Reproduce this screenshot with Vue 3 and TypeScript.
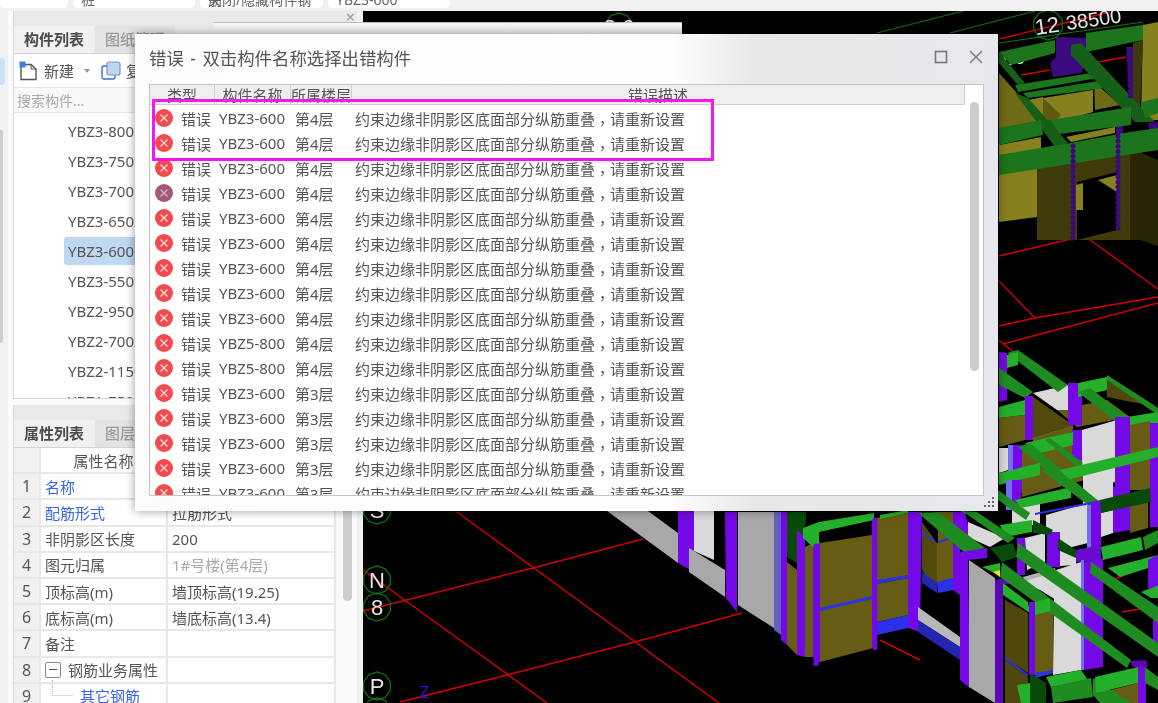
<script setup lang="ts">
type Shape = [string, string]

const PURPLE = '#7408e6'
const DPURPLE = '#5a08b4'
const LILAC = '#7070f0'
const BROWN = '#665c14'
const DBROWN = '#4e480c'
const GREEN = '#24b02a'
const MGREEN = '#1f8c22'
const DGREEN = '#084a08'
const GREY = '#a8a8a8'
const WHITE = '#d9d9d9'
const BLUE = '#2c30e8'
const NAVY = '#2326b0'
const TOP1 = '#1c741c'
const TOP2 = '#155f18'
const TPURPLE = '#3c0a80'
const OLIVE = '#86811e'
const OLIVE2 = '#6e6a16'

const shapes: Shape[] = [
  // upper block behind the dialog's right edge
  [OLIVE, '1143,25 1158,22 1158,120 1141,120'],
  ['#3f3a0a', '1133,43 1143,40 1140,110 1133,110'],
  [TPURPLE, '1126,47 1133,47 1133,100 1130,100'],
  [TPURPLE, '1056,37 1086,38 1086,63 1081,73 1053,77 1050,63 1056,57'],
  [OLIVE2, '999,73 1041,120 999,130'],
  [OLIVE, '1028,100 1043,97 1043,122 1035,124'],
  [OLIVE, '1043,98 1093,90 1093,112 1065,120 1043,120'],
  ['#5f5a12', '1043,98 1061,115 1055,122 1043,120'],
  [OLIVE2, '1094,82 1120,105 1095,110'],
  [TOP1, '999,52 1055,40 1055,53 1011,65'],
  [TOP1, '1086,33 1143,25 1143,40 1086,52'],
  [TOP2, '999,52 1025,83 1018,85 999,63'],
  [TOP1, '1015,85 1098,72 1098,78 1018,92'],
  [TOP1, '1023,93 1105,80 1105,88 1028,98'],
  [TOP2, '1015,93 1028,98 1068,143 1055,147'],
  [TOP2, '1071,45 1081,43 1155,122 1135,122 1071,55'],
  ['#403b0a', '1037,168 1130,148 1130,240 1037,240'],
  ['#2a2605', '1130,148 1158,160 1158,246 1140,240 1130,240'],
  [OLIVE, '999,173 1037,168 1037,217 999,222'],
  ['#000', '1077,182 1117,172 1117,230 1077,240'],
  [OLIVE, '1098,180 1117,175 1117,192'],
  [OLIVE, '1076,185 1083,183 1083,210 1076,210'],
  [OLIVE, '999,145 1041,137 1041,150 999,155'],
  [OLIVE, '1066,137 1115,127 1115,133 1071,142'],
  [TPURPLE, '1116,125 1123,125 1123,150 1116,150'],
  [TPURPLE, '1148,123 1158,122 1158,150 1153,150'],
  [TOP1, '999,128 1041,120 1043,135 999,145'],
  [TOP1, '1050,120 1131,107 1131,125 1051,135'],
  [TOP1, '1141,102 1158,98 1158,113 1145,118'],
  [TOP2, '1041,120 1050,120 1066,143 1056,145'],
  [TOP1, '999,155 1070,143 1130,132 1158,128 1158,150 999,175'],

  // middle right block
  [DBROWN, '1107,375 1157,407 1107,397'],
  [BROWN, '1057,410 1107,400 1130,417 1077,427'],
  ['#524a0c', '1033,397 1073,425 1033,437'],
  [WHITE, '1033,393 1068,385 1068,410 1057,410'],
  [MGREEN, '1018,350 1007,353 1058,392 1068,385'],
  [GREEN, '1007,355 1018,352 1018,365 1007,368'],
  [PURPLE, '999,352 1007,353 1007,400 999,402'],
  [MGREEN, '999,368 1033,392 1025,398 999,385'],
  [PURPLE, '1068,383 1082,383 1082,425 1068,425'],
  [MGREEN, '1107,375 1158,408 1158,415 1107,380'],
  [GREEN, '1078,383 1107,377 1107,390 1078,397'],
  [BROWN, '1033,437 1073,425 1073,432 1033,445'],
  [BROWN, '999,418 1025,415 1025,440 999,447'],
  [GREEN, '999,407 1025,400 1025,415 999,418'],
  [PURPLE, '1025,396 1033,396 1033,440 1025,440'],
  [MGREEN, '1078,392 1090,388 1158,440 1158,455'],
  [GREEN, '1127,417 1158,412 1158,423 1130,427'],
  [BROWN, '1022,450 1080,437 1085,480 1022,497'],
  [WHITE, '1082,430 1117,420 1117,480 1093,497 1082,470'],
  [WHITE, '1083,473 1113,470 1113,498 1083,505'],
  [BROWN, '1130,425 1150,421 1150,490 1130,490'],
  [PURPLE, '1115,417 1130,417 1130,490 1115,490'],
  [PURPLE, '1150,423 1158,423 1158,527 1150,527'],
  [PURPLE, '1072,430 1082,430 1082,460 1072,460'],
  [WHITE, '999,448 1008,448 1008,470 999,473'],
  [LILAC, '1008,445 1013,445 1013,493 1008,493'],
  [PURPLE, '1013,445 1022,445 1022,493 1013,493'],
  [GREEN, '1025,443 1073,432 1073,445 1040,453'],
  [MGREEN, '1018,447 1030,443 1097,500 1090,505'],
  [MGREEN, '1045,440 1050,438 1083,463 1077,467'],
  [GREEN, '1060,470 1158,447 1158,457 1067,480'],
  [GREEN, '999,473 1040,463 1040,475 999,485'],

  // lower right block
  [BROWN, '1130,497 1148,497 1148,528 1130,533'],
  [WHITE, '1012,505 1040,500 1040,525 1012,525'],
  [LILAC, '1006,480 1012,480 1012,510 1006,510'],
  [PURPLE, '1012,480 1021,480 1021,510 1012,510'],
  [MGREEN, '998,490 1030,513 1026,520 998,500'],
  [GREEN, '1015,500 1071,487 1071,498 1021,508'],
  [MGREEN, '1041,470 1058,470 1100,502 1088,505'],
  [WHITE, '1046,515 1088,503 1088,543 1068,548 1046,527'],
  [LILAC, '1087,505 1093,505 1093,550 1087,550'],
  [PURPLE, '1091,502 1101,500 1101,550 1091,550'],
  [WHITE, '1101,513 1113,510 1113,533 1101,537'],
  [PURPLE, '1113,487 1130,483 1130,530 1113,533'],
  [BLUE, '1035,513 1091,502 1091,504 1035,515'],
  [DGREEN, '1100,500 1150,488 1151,502 1101,513'],
  [WHITE, '1025,538 1045,533 1045,562 1027,570'],
  [PURPLE, '1047,532 1060,532 1060,567 1047,567'],
  [WHITE, '1060,545 1076,555 1076,565 1060,566'],
  [PURPLE, '1017,538 1025,538 1025,575 1017,575'],
  [DGREEN, '1033,520 1053,530 1050,535 1033,533'],
  [DGREEN, '1058,538 1076,550 1076,558 1058,550'],
  [GREEN, '1000,525 1032,520 1032,532 1005,537'],
  ['#6a0ad0', '1076,550 1101,545 1101,560 1076,562'],
  [GREEN, '1101,547 1141,537 1143,550 1103,560'],
  [MGREEN, '1143,537 1158,530 1158,543 1145,550'],
  [GREEN, '1108,568 1158,555 1158,565 1120,577'],
  [GREEN, '1141,592 1158,585 1158,598 1151,598'],
  [PURPLE, '1148,560 1158,555 1158,585 1148,590'],
  [PURPLE, '1153,607 1158,607 1158,645 1153,645'],
  [WHITE, '1056,570 1081,562 1081,670 1053,675 1054,600'],
  [WHITE, '1025,578 1056,570 1056,600 1040,590 1025,585'],
  ['#b0b0b0', '1023,577 1055,568 1056,572 1025,581'],
  [LILAC, '1081,560 1084,560 1084,670 1081,670'],
  [PURPLE, '1084,562 1103,558 1103,667 1084,670'],
  [MGREEN, '1091,562 1158,607 1158,623 1090,573'],

  // front walls and columns along the bottom
  [GREY, '607,511 648,511 678,533 678,563'],
  [PURPLE, '678,511 694,511 694,572 678,563'],
  [WHITE, '694,511 714,511 714,560 694,551'],
  [GREY, '689,548 725,570 725,597 689,572'],
  [PURPLE, '725,512 737,512 737,612 726,598'],
  [GREY, '738,512 774,512 774,628 738,605'],
  ['#6060c0', '774,512 781,512 781,635 774,630'],
  [PURPLE, '781,512 787,512 787,645 781,640'],
  [BROWN, '787,562 797,570 797,655 787,645'],
  [DGREEN, '787,512 806,512 806,520 797,563 787,557'],
  [PURPLE, '797,530 805,537 805,657 797,655'],
  [BROWN, '805,547 813,543 813,657 805,657'],
  [PURPLE, '813,543 820,541 820,662 815,664 813,657'],
  [BROWN, '820,543 872,535 877,647 820,662'],
  [BLUE, '820,608 876,595 876,598 820,611'],
  [PURPLE, '872,518 877,518 877,648 872,648'],
  [GREEN, '803,528 819,522 874,513 874,520 819,532 819,543 813,547 803,538'],
  [BROWN, '877,518 908,513 908,575 877,583'],
  [BLUE, '877,580 908,575 908,578 877,584'],
  [BROWN, '877,584 908,578 908,615 877,622'],
  [BLUE, '877,622 908,615 908,628 877,635'],
  [GREEN, '880,515 908,510 908,513 880,519'],
  [PURPLE, '908,512 922,512 920,632 908,628'],
  [BROWN, '938,512 953,512 953,540 938,544'],
  ['#524a0c', '922,522 937,543 937,593 922,570'],
  [BROWN, '937,543 953,538 953,578 937,583'],
  [BLUE, '922,532 935,540 935,542 922,534'],
  [BLUE, '938,541 948,538 948,540 938,543'],
  [NAVY, '922,572 937,583 937,593 922,583'],
  [BLUE, '937,582 953,578 953,590 938,593'],
  [PURPLE, '953,512 965,512 968,525 968,543 960,550 960,595 953,590'],
  [WHITE, '968,522 1005,538 990,547 968,537'],
  [MGREEN, '918,513 938,512 985,548 965,553'],
  [MGREEN, '960,511 977,512 1015,538 1008,543 968,515'],
  ['#b8b8b8', '918,607 960,637 960,647 918,620'],
  [NAVY, '918,620 960,647 960,660 918,632'],
  [PURPLE, '960,553 968,553 970,688 960,680'],
  [PURPLE, '960,552 987,548 987,558 968,560'],
  [GREY, '969,560 995,578 995,703 969,687'],
  [GREEN, '982,567 1000,563 1000,577 995,573'],
  ['#e5e520', '993,572 1000,570 1000,577'],
  [DGREEN, '990,548 1013,543 1017,557 1002,562'],
  [DPURPLE, '995,580 1005,578 1013,583 1003,585 1003,703 995,703'],
  [DBROWN, '1005,600 1028,613 1028,673 1005,658'],
  [BLUE, '1005,657 1028,674 1028,677 1005,660'],
  [DBROWN, '1005,660 1028,677 1028,703 1005,703'],
  [BROWN, '1035,613 1053,610 1053,673 1035,678'],
  [BLUE, '1035,673 1053,670 1053,673 1035,678'],
  [MGREEN, '1018,543 1158,643 1158,657 1016,557'],
  [MGREEN, '1002,562 1131,660 1127,668 1000,577'],
  [GREEN, '1003,583 1028,602 1030,613 1003,595'],
  [PURPLE, '1029,602 1035,602 1035,675 1029,675'],
  [GREEN, '1035,602 1050,598 1050,611 1035,615'],
  [GREEN, '1017,685 1030,683 1030,703 1021,703'],
  [BROWN, '1111,690 1138,683 1138,703 1125,703'],
  [MGREEN, '1093,678 1131,703 1100,703 1093,695'],
  [GREEN, '1046,677 1081,670 1088,680 1051,687'],
  [MGREEN, '1051,687 1091,678 1093,697 1053,703'],
  [GREEN, '1095,677 1138,667 1138,683 1096,693'],
  [DGREEN, '1030,673 1046,683 1046,703 1030,703'],
  [PURPLE, '1138,667 1146,667 1146,703 1138,703'],
  [DPURPLE, '1130,661 1146,660 1148,667 1133,667'],
  [MGREEN, '1145,667 1158,677 1158,690 1145,683'],
]

const redLines = [
  '457,512 719,703',
  '363,570 547,703',
  '363,611 533,568 643,539',
  '400,702 507,675 635,642 742,613',
  '999,39 1110,12',
  '1021,75 1050,70',
  '1098,62 1126,57',
  '1070,240 1117,225',
  '999,256 1067,240',
  '1090,240 1158,289',
  '999,281 1035,318',
  '999,326 1035,318 1158,297',
  '1003,344 1158,303',
  '999,340 1013,352',
  '1103,583 1125,575',
  '1122,612 1140,609',
  '880,640 920,660',
]

const greenLines = ['877,33 963,11', '950,33 1035,11', '999,43 1143,22']

// rows of round dots that give some columns their bumpy edge
const scallops: [string, number, number, number][] = [
  [PURPLE, 816, 546, 664],
  [PURPLE, 875, 520, 648],
  [PURPLE, 1032, 605, 674],
  [TPURPLE, 1073, 146, 238],
  [TPURPLE, 1118, 136, 228],
  [TPURPLE, 1130, 50, 100],
]

// ten sided ring used for the axis labels
function ring(cx: number, cy: number, r: number) {
  const pts: string[] = []
  for (let i = 0; i < 10; i++) {
    const a = (i * Math.PI) / 5 + Math.PI / 10
    pts.push(`${(cx + r * Math.cos(a)).toFixed(1)},${(cy + r * Math.sin(a)).toFixed(1)}`)
  }
  return pts.join(' ')
}

const rings = [
  { x: 377, y: 580, t: 'N' },
  { x: 377, y: 607, t: '8' },
  { x: 377, y: 510, t: 'S' },
  { x: 377, y: 686, t: 'P' },
  { x: 377, y: 712, t: '7' },
  { x: 619, y: 27, t: '8 6' },
]

const components = ['YBZ3-800', 'YBZ3-750', 'YBZ3-700', 'YBZ3-650', 'YBZ3-600', 'YBZ3-550', 'YBZ2-950', 'YBZ2-700', 'YBZ2-1150', 'YBZ1-750']

const props = [
  { n: 1, name: '名称', value: 'YBZ3-600', link: true },
  { n: 2, name: '配筋形式', value: '拉筋形式', link: true },
  { n: 3, name: '非阴影区长度', value: '200' },
  { n: 4, name: '图元归属', value: '1#号楼(第4层)', muted: true },
  { n: 5, name: '顶标高(m)', value: '墙顶标高(19.25)' },
  { n: 6, name: '底标高(m)', value: '墙底标高(13.4)' },
  { n: 7, name: '备注', value: '' },
  { n: 8, name: '钢筋业务属性', value: '', group: true },
  { n: 9, name: '其它钢筋', value: '', child: true, link: true },
]

const errors = [
  ...Array.from({ length: 9 }, () => ({ name: 'YBZ3-600', floor: '第4层' })),
  ...Array.from({ length: 2 }, () => ({ name: 'YBZ5-800', floor: '第4层' })),
  ...Array.from({ length: 5 }, () => ({ name: 'YBZ3-600', floor: '第3层' })),
]
</script>

<template>
  <div class="app">
    <div class="topbar">
      <div class="pill p1">楼层</div>
      <div class="pill p2">桩</div>
      <div class="pill p3">关闭/隐藏构件钢筋</div>
      <div class="pill p4">YBZ3-600</div>
    </div>

    <div class="main">
      <div class="rail">
        <div class="rail-item"></div>
        <div class="rail-scroll"></div>
      </div>

      <div class="side">
        <section class="panel upper">
          <div class="panel-title"><span class="panel-x">×</span></div>
          <div class="tabs">
            <div class="tab active">构件列表</div>
            <div class="tab">图纸管理</div>
          </div>
          <div class="toolbar">
            <svg class="tool-icon" width="20" height="20" viewBox="0 0 20 20">
              <path d="M2 3.5h10l5 4.5v10.5H2z" fill="#fff" stroke="#555" stroke-width="1.4" />
              <path d="M12 3.5v4.5h5" fill="none" stroke="#555" stroke-width="1" />
              <rect x="0.5" y="0.5" width="6" height="6" fill="#3a7fe0" />
            </svg>
            <span class="tool-label">新建</span>
            <span class="caret"></span>
            <svg class="tool-icon copy" width="20" height="20" viewBox="0 0 20 20">
              <rect x="1" y="5" width="13" height="13" rx="2" fill="#fff" stroke="#2f73c9" stroke-width="1.4" />
              <rect x="6" y="1" width="13" height="13" rx="2" fill="#bcd6f2" stroke="#7d93ad" stroke-width="1.2" />
            </svg>
            <span class="tool-label">复制</span>
          </div>
          <div class="search">搜索构件...</div>
          <div class="list">
            <div v-for="(c, i) in components" :key="c" class="list-row" :class="{ selected: i === 4 }">
              <span class="list-text">{{ c }}</span>
            </div>
          </div>
        </section>

        <section class="panel lower">
          <div class="panel-title short"></div>
          <div class="tabs">
            <div class="tab active">属性列表</div>
            <div class="tab">图层管理</div>
          </div>
          <div class="prop-wrap">
            <div class="prop-table">
              <div class="prop-row head">
                <div class="cell num"></div>
                <div class="cell name center">属性名称</div>
                <div class="cell value center">属性值</div>
              </div>
              <div v-for="p in props" :key="p.n" class="prop-row">
                <div class="cell num">{{ p.n }}</div>
                <div class="cell name" :class="{ link: p.link, child: p.child }">
                  <span v-if="p.group" class="minus"></span>
                  <span v-if="p.child" class="tree"></span>
                  {{ p.name }}
                </div>
                <div class="cell value" :class="{ muted: p.muted }">{{ p.value }}</div>
              </div>
            </div>
            <div class="prop-track"><div class="prop-thumb"></div></div>
          </div>
        </section>
      </div>

      <div class="view">
        <svg width="795" height="692" viewBox="363 11 795 692">
          <rect x="363" y="11" width="795" height="692" fill="#000" />
          <polyline v-for="l in greenLines" :key="l" :points="l" fill="none" stroke="#0f7a0f" stroke-width="1" />
          <polyline v-for="l in redLines" :key="l" :points="l" fill="none" stroke="#d40000" stroke-width="1.4" />
          <text class="axis small" x="1004" y="66" transform="rotate(-8 1004 66)">00</text>
          <polygon v-for="(s, i) in shapes" :key="i" :points="s[1]" :fill="s[0]" />
          <line v-for="c in scallops" :key="c[1] + '-' + c[2]" :x1="c[1]" :y1="c[2]" :x2="c[1]" :y2="c[3]" :stroke="c[0]" stroke-width="5" stroke-linecap="round" stroke-dasharray="0.1 5" />
          <g v-for="r in rings" :key="r.y + r.x">
            <polygon :points="ring(r.x, r.y, 14)" fill="none" stroke="#0f7a0f" stroke-width="1.2" />
            <text :x="r.x" :y="r.y + 8" class="axis" text-anchor="middle">{{ r.t }}</text>
          </g>
          <polygon :points="ring(1048, 25, 15)" fill="none" stroke="#0f7a0f" stroke-width="1.2" />
          <text class="axis" x="1036" y="35" transform="rotate(-8 1036 35)">12</text>
          <text class="axis small" x="1067" y="30" transform="rotate(-8 1067 30)">38500</text>
          <text class="axis-z" x="419" y="698">Z</text>
        </svg>
      </div>
    </div>

    <div class="back-window"></div>

    <div class="dialog">
      <div class="dialog-head">
        <span class="dialog-title">错误 - 双击构件名称选择出错构件</span>
        <svg class="win-btn" width="14" height="14" viewBox="0 0 14 14">
          <rect x="1.5" y="1.5" width="11" height="11" fill="none" stroke="#777" stroke-width="1.6" />
        </svg>
        <svg class="win-btn close" width="16" height="16" viewBox="0 0 16 16">
          <path d="M2 2l12 12M14 2L2 14" stroke="#777" stroke-width="1.4" fill="none" />
        </svg>
      </div>
      <div class="err-box">
        <div class="err-head">
          <div class="eh c1">类型</div>
          <div class="eh c2">构件名称</div>
          <div class="eh c3">所属楼层</div>
          <div class="eh c4">错误描述</div>
        </div>
        <div class="err-body">
          <div v-for="(e, i) in errors" :key="i" class="err-row">
            <div class="err-type">
              <svg width="18" height="18" viewBox="0 0 18 18">
                <circle cx="9" cy="9" r="9" :fill="i === 3 ? '#a45874' : '#f34a4d'" />
                <path d="M5.5 5.5l7 7M12.5 5.5l-7 7" :stroke="i === 3 ? '#c9b8d8' : '#fde3e3'" stroke-width="1.2" fill="none" />
              </svg>
              <span>错误</span>
            </div>
            <div>{{ e.name }}</div>
            <div>{{ e.floor }}</div>
            <div>约束边缘非阴影区底面部分纵筋重叠<span class="comma">，</span>请重新设置</div>
          </div>
        </div>
        <div class="err-thumb"></div>
      </div>
      <svg class="grip" width="11" height="11" viewBox="0 0 11 11" fill="#666">
        <rect x="8" y="0" width="2" height="2" />
        <rect x="4" y="4" width="2" height="2" />
        <rect x="8" y="4" width="2" height="2" />
        <rect x="0" y="8" width="2" height="2" />
        <rect x="4" y="8" width="2" height="2" />
        <rect x="8" y="8" width="2" height="2" />
      </svg>
    </div>

    <div class="mark"></div>
  </div>
</template>

<style scoped>
.app {
  position: relative;
  width: 1158px;
  height: 703px;
  overflow: hidden;
  background: #f1f1f1;
  font-family: "Noto Sans", "Noto Sans CJK SC", sans-serif;
  font-size: 15px;
  color: #555;
  filter: blur(0.35px);
}
.topbar {
  display: flex;
  height: 11px;
  overflow: hidden;
}
.pill {
  height: 8px;
  background: #fff;
  border-radius: 0 0 5px 5px;
  margin-right: 5px;
  line-height: 0;
  padding-left: 8px;
  overflow: hidden;
  font-size: 14px;
  color: #666;
}
.p1 { width: 60px; color: transparent; }
.p2 { width: 114px; }
.p3 { width: 115px; }
.p4 { width: 114px; }
.main {
  display: flex;
  height: 692px;
}
.rail {
  width: 13px;
  flex: none;
  background: linear-gradient(90deg, #f1f1f1 0 8px, #fafafa 8px);
}
.rail-item {
  width: 5px;
  height: 27px;
  margin-top: 47px;
  background: #cfe0f5;
  border-radius: 0 4px 4px 0;
}
.rail-scroll {
  width: 3px;
  height: 213px;
  margin-top: 45px;
  background: #cdcdcd;
  border-radius: 0 2px 2px 0;
}
.side {
  width: 344px;
  flex: none;
  display: flex;
  flex-direction: column;
  gap: 6px;
  background: #fafafa;
}
.panel {
  display: flex;
  flex-direction: column;
  background: #fff;
  overflow: hidden;
}
.upper {
  height: 387px;
  border-left: 1px solid #d8d8d8;
  border-bottom: 1px solid #d8d8d8;
}
.lower {
  flex: 1;
  border-left: 1px solid #d8d8d8;
  background: #fafafa;
}
.panel-title {
  height: 15px;
  flex: none;
  background: #e9e9e9;
  position: relative;
}
.panel-x {
  position: absolute;
  right: 2px;
  top: -5px;
  font-size: 16px;
  color: #999;
}
.tabs {
  display: flex;
  height: 27px;
  flex: none;
  background: #ececec;
  border-bottom: 1px solid #d4d4d4;
}
.tab {
  width: 80px;
  margin-right: 1px;
  text-align: center;
  line-height: 26px;
  background: #e3e3e3;
  color: #9a9a9a;
  font-size: 15px;
  font-weight: 500;
}
.tab.active {
  background: #f1f1f1;
  color: #4a4a4a;
  font-weight: 700;
}
.toolbar {
  display: flex;
  align-items: center;
  height: 34px;
  flex: none;
  padding-left: 5px;
  border-bottom: 1px solid #e4e4e4;
  box-sizing: border-box;
}
.tool-icon {
  flex: none;
}
.tool-icon.copy {
  margin-left: 11px;
}
.tool-label {
  margin-left: 5px;
  color: #555;
  white-space: nowrap;
}
.caret {
  width: 0;
  height: 0;
  margin-left: 10px;
  border-left: 3px solid transparent;
  border-right: 3px solid transparent;
  border-top: 4px solid #999;
}
.search {
  height: 25px;
  flex: none;
  padding-left: 3px;
  line-height: 26px;
  color: #aaa;
  font-size: 14px;
  background: #f8f8f8;
  border-bottom: 1px solid #e4e4e4;
  box-sizing: border-box;
}
.list {
  flex: 1;
  overflow: hidden;
  padding-top: 3px;
}
.list-row {
  height: 30px;
  display: flex;
  align-items: center;
  padding-left: 50px;
  white-space: nowrap;
}
.list-text {
  padding: 4px 4px;
  border-radius: 3px;
  color: #555;
  line-height: 20px;
}
.list-row.selected .list-text {
  background: #bfd7f0;
  padding-right: 30px;
}
.prop-wrap {
  flex: 1;
  display: flex;
  background: #fff;
}
.prop-table {
  width: 322px;
  flex: none;
}
.prop-row {
  display: flex;
  height: 26.2px;
  border-bottom: 2px solid #e8e8e8;
  box-sizing: border-box;
}
.cell {
  display: flex;
  align-items: center;
  white-space: nowrap;
  padding-left: 4px;
  border-right: 2px solid #e8e8e8;
  box-sizing: border-box;
  color: #555;
}
.num {
  width: 27px;
  flex: none;
  padding-left: 0;
  justify-content: center;
  background: #f1f1f1;
  font-size: 16px;
}
.name {
  width: 127px;
  flex: none;
}
.value {
  flex: 1;
}
.center {
  justify-content: center;
  padding-left: 0;
}
.link {
  color: #3565e8;
}
.child {
  padding-left: 39px;
  position: relative;
}
.muted {
  color: #aaa;
}
.minus {
  display: inline-block;
  width: 14px;
  height: 14px;
  margin-right: 7px;
  border: 1px solid #888;
  border-radius: 2px;
  position: relative;
  flex: none;
}
.minus::after {
  content: "";
  position: absolute;
  left: 3px;
  right: 3px;
  top: 6px;
  height: 1px;
  background: #555;
}
.tree {
  position: absolute;
  left: 11px;
  top: -4px;
  width: 20px;
  height: 15px;
  border-left: 1px dotted #bbb;
  border-bottom: 1px solid #ddd;
}
.prop-track {
  width: 21px;
  flex: none;
  padding: 53px 0 0 7px;
  box-sizing: border-box;
  background: #fafafa;
}
.prop-thumb {
  width: 9px;
  height: 100px;
  border-radius: 5px;
  background: #cdcdcd;
}
.view {
  margin-left: 6px;
  flex: 1;
  line-height: 0;
}
.axis {
  fill: #e6e6e6;
  font-family: "Liberation Sans", sans-serif;
  font-size: 22px;
}
.axis.small {
  font-size: 20px;
}
.axis-z {
  fill: #1a1ae0;
  font-family: "Liberation Sans", sans-serif;
  font-size: 17px;
}
.back-window {
  position: absolute;
  left: 213px;
  top: 22px;
  width: 469px;
  height: 14px;
  background: linear-gradient(#f7f7f7, #e6e6e6);
  border-top: 1px solid #bbb;
  box-sizing: border-box;
}
.dialog {
  position: absolute;
  left: 135px;
  top: 34px;
  width: 863px;
  height: 477px;
  box-sizing: border-box;
  padding: 0 14px;
  background: linear-gradient(90deg, #fcfcfc 0, #fefefe 62%, #e7e8e6 72%, #e8e7ee 100%);
  box-shadow: 0 0 9px rgba(0, 0, 0, 0.4);
}
.dialog-head {
  display: flex;
  align-items: center;
  height: 50px;
}
.dialog-title {
  flex: 1;
  margin-top: -4px;
  font-size: 17.4px;
  color: #555;
  word-spacing: 2px;
}
.win-btn {
  flex: none;
  margin-right: 20px;
  margin-top: -4px;
}
.win-btn.close {
  margin-right: 0;
}
.err-box {
  position: relative;
  width: 835px;
  height: 412px;
  box-sizing: border-box;
  border: 1px solid #c4c4c4;
  background: #fff;
  overflow: hidden;
}
.err-head {
  display: flex;
  width: 815px;
  height: 20px;
  background: #efefef;
  border-bottom: 1px solid #cfcfcf;
  box-sizing: border-box;
}
.eh {
  text-align: center;
  line-height: 20px;
  border-right: 1px solid #cfcfcf;
  box-sizing: border-box;
  color: #555;
  overflow: hidden;
}
.c1 { width: 65px; }
.c2 { width: 76px; }
.c3 { width: 61px; }
.c4 { flex: 1; }
.err-body {
  padding-top: 0.5px;
}
.err-row {
  display: grid;
  grid-template-columns: 69px 76px 60px 1fr;
  align-items: center;
  height: 25px;
  color: #555;
  white-space: nowrap;
}
.err-type {
  display: flex;
  align-items: center;
  gap: 8px;
  padding-left: 5px;
}
.err-type svg {
  flex: none;
}
.comma {
  font-family: "Noto Sans CJK TC", sans-serif;
  vertical-align: -4px;
  line-height: 0;
}
.err-thumb {
  position: absolute;
  left: 820px;
  top: 17px;
  width: 9px;
  height: 269px;
  border-radius: 5px;
  background: #cdcdcd;
}
.grip {
  position: absolute;
  right: 3px;
  bottom: 3px;
}
.mark {
  position: absolute;
  left: 152px;
  top: 99px;
  width: 562px;
  height: 62px;
  box-sizing: border-box;
  border: 3px solid #f716f0;
}
</style>
